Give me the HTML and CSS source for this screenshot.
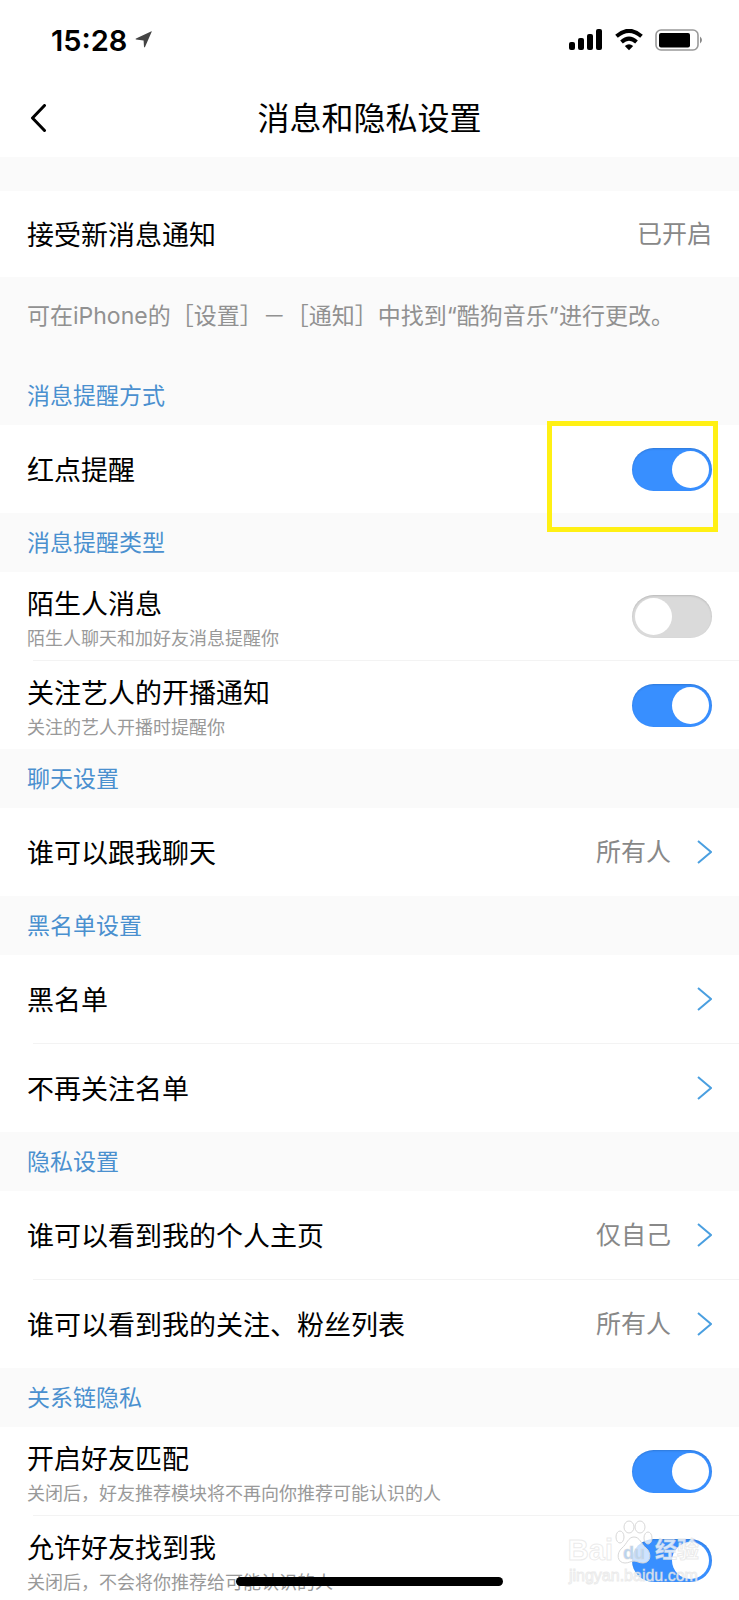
FILE: index.html
```html
<!DOCTYPE html>
<html lang="zh-CN">
<head>
    <meta charset="UTF-8">
    <meta name="viewport" content="width=device-width, initial-scale=1.0">
    <title>消息和隐私设置</title>
    <link rel="stylesheet" href="styles.css">
</head>
<body>
    <div class="page">
        <div class="status-bar">
            <div class="status-left">
                <span class="time">15:28</span>
                <svg width="18" height="18" viewBox="0 0 18 18">
                    <path d="M16.8 0.6 L10 16 Q9.3 17 9 15.8 L8.6 9.4 L1 8.6 Q0 8.2 1 7.6 L16 0.4 Q17 0 16.8 0.6Z" fill="#444"/>
                </svg>
            </div>
            <div class="status-right">
                <svg width="34" height="22" viewBox="0 0 34 22">
                    <rect x="0" y="13" width="6" height="8" rx="2"/>
                    <rect x="9" y="9" width="6" height="12" rx="2"/>
                    <rect x="18" y="5" width="6" height="16" rx="2"/>
                    <rect x="27" y="0" width="6" height="21" rx="2"/>
                </svg>
                <svg width="28" height="22" viewBox="0 0 28 22">
                    <path d="M1.5 7.2 Q14 -3.6 26.5 7.2" fill="none" stroke="#000" stroke-width="4"/>
                    <path d="M6.5 13 Q14 6.4 21.5 13" fill="none" stroke="#000" stroke-width="4"/>
                    <path d="M9.8 17 Q14 13.4 18.2 17 L14 21.2Z"/>
                </svg>
                <svg width="48" height="22" viewBox="0 0 48 22">
                    <rect x="1" y="1" width="42" height="20" rx="5" fill="none" stroke="#999" stroke-width="1.6"/>
                    <rect x="4" y="4" width="31" height="14.5" rx="2"/>
                    <path d="M45 7.5 Q49 11 45 14.5Z" fill="#888"/>
                </svg>
            </div>
        </div>

        <div class="header">
            <button class="back-btn" aria-label="返回">
                <svg width="17" height="30" viewBox="0 0 17 30">
                    <path d="M14.5 1.5 L2.5 14 L14.5 26.5" fill="none" stroke="#000" stroke-width="3" stroke-linecap="round" stroke-linejoin="round"/>
                </svg>
            </button>
            <h1>消息和隐私设置</h1>
        </div>

        <div class="group first">
            <div class="row">
                <span class="name">接受新消息通知</span>
                <span class="value">已开启</span>
            </div>
        </div>
        <p class="note">可在iPhone的［设置］－［通知］中找到“酷狗音乐”进行更改。</p>

        <h2>消息提醒方式</h2>
        <div class="group">
            <div class="row">
                <label class="name" for="red-dot">红点提醒</label>
                <input class="switch" type="checkbox" id="red-dot" checked>
                <div class="highlight"></div>
            </div>
        </div>

        <h2>消息提醒类型</h2>
        <div class="group">
            <div class="row">
                <label class="text" for="stranger">
                    <span class="name">陌生人消息</span>
                    <span class="desc">陌生人聊天和加好友消息提醒你</span>
                </label>
                <input class="switch" type="checkbox" id="stranger">
            </div>
            <div class="row">
                <label class="text" for="artist">
                    <span class="name">关注艺人的开播通知</span>
                    <span class="desc">关注的艺人开播时提醒你</span>
                </label>
                <input class="switch" type="checkbox" id="artist" checked>
            </div>
        </div>

        <h2>聊天设置</h2>
        <div class="group">
            <a class="row" href="#">
                <span class="name">谁可以跟我聊天</span>
                <span class="value">所有人</span>
                <svg class="arrow" width="15" height="24" viewBox="0 0 15 24"><path d="M1 1 L14 12 L1 23"/></svg>
            </a>
        </div>

        <h2>黑名单设置</h2>
        <div class="group">
            <a class="row" href="#">
                <span class="name">黑名单</span>
                <svg class="arrow" width="15" height="24" viewBox="0 0 15 24"><path d="M1 1 L14 12 L1 23"/></svg>
            </a>
            <a class="row" href="#">
                <span class="name">不再关注名单</span>
                <svg class="arrow" width="15" height="24" viewBox="0 0 15 24"><path d="M1 1 L14 12 L1 23"/></svg>
            </a>
        </div>

        <h2>隐私设置</h2>
        <div class="group">
            <a class="row" href="#">
                <span class="name">谁可以看到我的个人主页</span>
                <span class="value">仅自己</span>
                <svg class="arrow" width="15" height="24" viewBox="0 0 15 24"><path d="M1 1 L14 12 L1 23"/></svg>
            </a>
            <a class="row" href="#">
                <span class="name">谁可以看到我的关注、粉丝列表</span>
                <span class="value">所有人</span>
                <svg class="arrow" width="15" height="24" viewBox="0 0 15 24"><path d="M1 1 L14 12 L1 23"/></svg>
            </a>
        </div>

        <h2>关系链隐私</h2>
        <div class="group">
            <div class="row">
                <label class="text" for="match">
                    <span class="name">开启好友匹配</span>
                    <span class="desc">关闭后，好友推荐模块将不再向你推荐可能认识的人</span>
                </label>
                <input class="switch" type="checkbox" id="match" checked>
            </div>
            <div class="row">
                <label class="text" for="find-me">
                    <span class="name">允许好友找到我</span>
                    <span class="desc">关闭后，不会将你推荐给可能认识的人</span>
                </label>
                <input class="switch" type="checkbox" id="find-me" checked>
            </div>
        </div>

        <div class="watermark">
            <div class="brand">
                <span>Bai</span>
                <span class="paw">
                    <svg width="38" height="46" viewBox="0 0 38 46">
                        <ellipse cx="5" cy="17" rx="4" ry="6"/>
                        <ellipse cx="14" cy="7" rx="5" ry="6"/>
                        <ellipse cx="25" cy="7" rx="5" ry="6"/>
                        <ellipse cx="33" cy="18" rx="4" ry="6"/>
                        <path d="M19 17 C13 17 12 24 7 28 C1 33 2 43 10 43 C14 43 16 41 19 41 C22 41 24 43 28 43 C36 43 37 33 31 28 C26 24 25 17 19 17Z"/>
                    </svg>
                    <span class="du">du</span>
                </span>
                <span class="cn">经验</span>
            </div>
            <div class="site">jingyan.baidu.com</div>
        </div>
        <div class="home-bar"></div>
    </div>
</body>
</html>
```
FILE: styles.css
```css
* {
    box-sizing: border-box;
}

body {
    margin: 0;
    font-family: "Liberation Sans", "Noto Sans CJK SC", sans-serif;
    background-color: #fafafa;
    color: #000;
}

/* one phone screen, the list runs on below it */
.page {
    position: relative;
    height: 100vh;
    overflow: hidden;
}

.status-bar {
    display: flex;
    justify-content: space-between;
    align-items: center;
    height: 80px;
    padding: 0 36px 0 51px;
    background-color: #fff;
}

.status-left,
.status-right {
    display: flex;
    align-items: center;
    gap: 8px;
}

.status-right {
    gap: 12px;
}

.time {
    font-family: Inter, sans-serif;
    font-size: 29px;
    font-weight: 600;
}

.header {
    display: grid;
    grid-template-columns: 60px 1fr 60px;
    align-items: center;
    height: 77px;
    background-color: #fff;
}

.back-btn {
    display: flex;
    padding: 0 0 0 30px;
    border: none;
    background: none;
    cursor: pointer;
}

h1 {
    margin: 0;
    font-size: 32px;
    font-weight: normal;
    line-height: 48px;
    text-align: center;
}

.group {
    background-color: #fff;
}

.first {
    margin-top: 34px;
}

.row {
    position: relative;
    display: flex;
    align-items: center;
    gap: 26px;
    min-height: 88px;
    padding: 0 27px;
    color: #000;
    text-decoration: none;
}

.first .row {
    min-height: 86px;
}

.row + .row {
    margin-top: 1px;
}

/* divider starts a little after the text */
.row + .row::before {
    content: "";
    position: absolute;
    top: -1px;
    left: 33px;
    right: 0;
    height: 1px;
    background-color: #f3f3f3;
}

.text {
    flex: 1;
    padding-top: 8px;
}

.name {
    display: block;
    flex: 1;
    font-size: 27px;
    line-height: 38px;
}

.row > .name {
    padding-top: 3px;
}

.desc {
    display: block;
    font-size: 18px;
    line-height: 30px;
    color: #999;
}

.value {
    font-size: 25px;
    line-height: 38px;
    color: #888;
}

.arrow {
    fill: none;
    stroke: #4a9fe0;
    stroke-width: 2;
}

.note {
    margin: 0;
    padding: 20px 27px 31px;
    font-family: Inter, "Noto Sans CJK SC", sans-serif;
    font-size: 23px;
    line-height: 38px;
    color: #919191;
}

h2 {
    margin: 0;
    padding: 11px 27px 10px;
    font-size: 23px;
    font-weight: normal;
    line-height: 38px;
    color: #4a90cf;
}

.switch {
    appearance: none;
    display: flex;
    align-items: center;
    width: 80px;
    height: 43px;
    margin: 0;
    padding: 0 3px;
    border-radius: 22px;
    background-color: #dadada;
    box-shadow: inset 0 1px 2px rgba(0, 0, 0, 0.15);
    cursor: pointer;
}

.switch::before {
    content: "";
    width: 37px;
    height: 37px;
    border-radius: 50%;
    background-color: #fff;
}

.switch:checked {
    justify-content: flex-end;
    background-color: #388fff;
}

.highlight {
    position: absolute;
    top: -4px;
    right: 21px;
    width: 171px;
    height: 111px;
    border: 5px solid #fff014;
    z-index: 1;
}

.watermark {
    position: absolute;
    right: 40px;
    bottom: 14px;
    color: rgba(255, 255, 255, 0.8);
    -webkit-text-stroke: 1px rgba(215, 215, 215, 0.5);
    pointer-events: none;
}

.brand {
    display: flex;
    align-items: flex-end;
    gap: 2px;
    font-size: 29px;
    font-weight: bold;
    line-height: 32px;
}

.paw {
    position: relative;
    display: flex;
}

.paw svg {
    fill: rgba(255, 255, 255, 0.75);
    stroke: #d8d8d8;
}

.du {
    position: absolute;
    left: 0;
    right: 0;
    bottom: 3px;
    font-size: 18px;
    line-height: 20px;
    text-align: center;
    color: #b9d4f2;
}

.cn {
    font-size: 22px;
}

.site {
    font-size: 16px;
    line-height: 20px;
    text-align: center;
}

.home-bar {
    position: absolute;
    left: 32%;
    right: 32%;
    bottom: 14px;
    height: 9px;
    border-radius: 5px;
    background-color: #000;
}
```
